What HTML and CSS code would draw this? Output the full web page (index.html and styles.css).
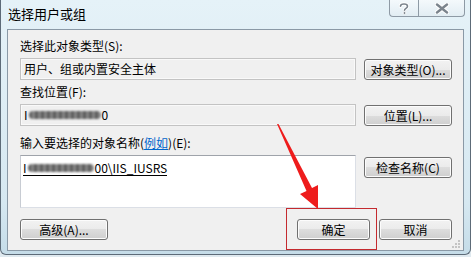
FILE: index.html
```html
<!DOCTYPE html>
<html lang="zh-CN">
<head>
    <meta charset="UTF-8">
    <title>选择用户或组</title>
    <link rel="stylesheet" href="styles.css">
</head>
<body>
    <div class="window">
        <div class="titlebar">
            <span class="title">选择用户或组</span>
            <div class="caption-btns">
                <span class="cap-btn help">
                    <svg width="12" height="13" viewBox="0 0 12 13">
                        <path d="M2.5 4.2 C2.5 1.2 9.5 1.2 9.5 4.2 C9.5 6.4 6.5 6.2 6.5 8.2" fill="none" stroke="#fff" stroke-width="3.4" stroke-linecap="round"/>
                        <path d="M2.5 4.2 C2.5 1.2 9.5 1.2 9.5 4.2 C9.5 6.4 6.5 6.2 6.5 8.2" fill="none" stroke="#7b848d" stroke-width="1.6" stroke-linecap="round"/>
                        <circle cx="6.5" cy="11" r="1.4" fill="#7b848d" stroke="#fff" stroke-width="0.8"/>
                    </svg>
                </span>
                <span class="cap-btn close">
                    <svg width="14" height="11" viewBox="0 0 14 11">
                        <path d="M2 1.5 L12 9.5 M12 1.5 L2 9.5" stroke="#fff" stroke-width="4.4" stroke-linecap="round"/>
                        <path d="M2 1.5 L12 9.5 M12 1.5 L2 9.5" stroke="#7b848d" stroke-width="2.4" stroke-linecap="round"/>
                    </svg>
                </span>
            </div>
        </div>

        <div class="client">
            <div class="label">选择此对象类型(S):</div>
            <div class="row">
                <div class="field">用户、组或内置安全主体</div>
                <button class="btn">对象类型(O)...</button>
            </div>

            <div class="label">查找位置(F):</div>
            <div class="row">
                <div class="field">I<span class="blur"></span>0</div>
                <button class="btn">位置(L)...</button>
            </div>

            <div class="label names">输入要选择的对象名称(<span class="link">例如</span>)(E):</div>
            <div class="row top">
                <div class="field editor">
                    <span class="entry">I<span class="blur short"></span>00\IIS_IUSRS</span>
                </div>
                <button class="btn">检查名称(C)</button>
            </div>

            <div class="footer">
                <button class="btn">高级(A)...</button>
                <div class="actions">
                    <button class="btn small">确定</button>
                    <button class="btn small">取消</button>
                </div>
            </div>

            <svg class="grip" width="8" height="8" viewBox="0 0 8 8">
                <rect x="6" y="0" width="2" height="2" fill="#c4c4c4"/>
                <rect x="3" y="3" width="2" height="2" fill="#c4c4c4"/>
                <rect x="6" y="3" width="2" height="2" fill="#c4c4c4"/>
                <rect x="0" y="6" width="2" height="2" fill="#c4c4c4"/>
                <rect x="3" y="6" width="2" height="2" fill="#c4c4c4"/>
                <rect x="6" y="6" width="2" height="2" fill="#c4c4c4"/>
            </svg>
        </div>

        <!-- annotation drawn over the dialog -->
        <div class="mark"></div>
        <svg class="arrow" width="471" height="257" viewBox="0 0 471 257">
            <polygon points="277,124 278.5,124 312,188 318,185 318,209 300,194 306.5,191" fill="#ee1c1c"/>
        </svg>
    </div>
</body>
</html>
```

FILE: styles.css
```css
body {
    margin: 0;
    padding: 0;
    background-color: #dfe9ef;
    font-family: "Noto Sans CJK SC", "Liberation Sans", sans-serif;
    font-size: 12px;
    color: #000;
}

.window {
    position: relative;
    width: 471px;
    height: 255px;
    box-sizing: border-box;
    border: 1px solid #5d6b78;
    border-top: none;
    border-radius: 0 0 6px 6px;
    background: linear-gradient(to bottom, #e5f2f8, #d6e8f1 80%, #c5dce8);
    padding: 0 5px 0 6px;
}

.titlebar {
    display: flex;
    justify-content: space-between;
    align-items: flex-start;
    height: 29px;
}

.title {
    margin-top: 5px;
    padding-left: 1px;
    font-size: 13px;
    line-height: 17px;
}

.caption-btns {
    display: flex;
}

.cap-btn {
    display: flex;
    align-items: center;
    justify-content: center;
    height: 17px;
    box-sizing: border-box;
    border: 1px solid #8e9aa5;
    border-top: none;
    background: linear-gradient(to bottom, #f4f9fc, #e2edf3);
}

.help {
    width: 29px;
    border-right: none;
    border-radius: 0 0 0 4px;
}

.close {
    width: 47px;
    border-radius: 0 0 4px 0;
}

.client {
    position: relative;
    width: 457px;
    height: 222px;
    box-sizing: border-box;
    border: 1px solid #8a99a6;
    background-color: #f0f0f0;
    padding: 9px 11px 0 12px;
}

.label {
    line-height: 14px;
    height: 14px;
    margin-bottom: 5px;
}

/* sibling margins collapse, so this is the whole gap above */
.label.names {
    margin-top: 10px;
}

.link {
    color: #0066cc;
    text-decoration: underline;
}

.row {
    display: flex;
    align-items: center;
    gap: 8px;
    margin-bottom: 5px;
}

.row.top {
    align-items: flex-start;
}

.field {
    width: 336px;
    height: 22px;
    box-sizing: border-box;
    border: 1px solid #c3c3c3;
    box-shadow: inset 0 0 0 1px #f9f9f9;
    padding: 0 3px;
    line-height: 20px;
    display: flex;
    align-items: center;
    white-space: nowrap;
}

.editor {
    height: 53px;
    background-color: #fff;
    border-color: #dbdfe6;
    border-top-color: #9fa3aa;
    border-left-color: #c8ccd3;
    box-shadow: none;
    align-items: flex-start;
    padding: 5px 2px;
}

.entry {
    display: inline-flex;
    align-items: center;
    line-height: 14px;
    border-bottom: 1px solid #000;
}

.blur {
    display: inline-block;
    width: 72px;
    height: 8px;
    margin: 0 1px;
    border-radius: 4px;
    background: repeating-linear-gradient(to right, #5e5e5e 0 3px, #858585 3px 6px);
    filter: blur(1.2px);
}

.blur.short {
    width: 66px;
}

.row.top .btn {
    margin-top: 2px;
}

.btn {
    width: 88px;
    height: 21px;
    box-sizing: border-box;
    border: 1px solid #707070;
    border-radius: 3px;
    background: linear-gradient(to bottom, #f2f2f2 0%, #ebebeb 50%, #dddddd 50%, #cfcfcf 100%);
    box-shadow: inset 0 0 0 1px #fcfcfc;
    font-family: "Noto Sans CJK SC", "Liberation Sans", sans-serif;
    font-size: 12px;
    line-height: 17px;
    padding: 0;
    color: #000;
    flex-shrink: 0;
}

.btn.small {
    width: 73px;
}

.footer {
    display: flex;
    justify-content: space-between;
    margin-top: 11px;
}

.actions {
    display: flex;
    gap: 9px;
}

.grip {
    position: absolute;
    right: 3px;
    bottom: 2px;
}

.mark {
    position: absolute;
    left: 285px;
    top: 208px;
    width: 91px;
    height: 42px;
    box-sizing: border-box;
    border: 1px solid #c42a2f;
}

.arrow {
    position: absolute;
    left: -1px;
    top: 0;
    pointer-events: none;
}
```
